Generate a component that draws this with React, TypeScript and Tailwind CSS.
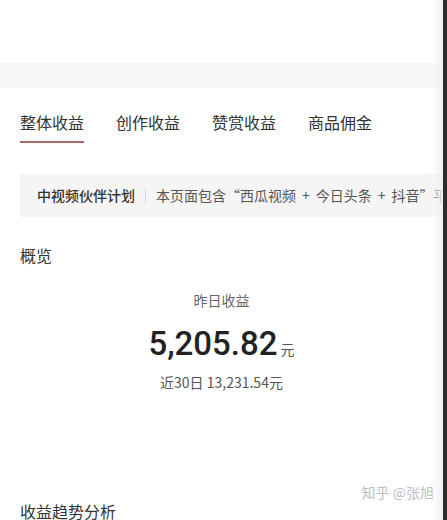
const tabs = ["整体收益", "创作收益", "赞赏收益", "商品佣金"];

export default function App() {
  return (
    <div
      className="flex h-[520px] w-[447px] overflow-hidden bg-white text-[#333]"
      style={{ fontFamily: '"Noto Sans CJK SC", "Noto Sans", sans-serif' }}
    >
      <div className="relative flex min-w-0 flex-1 flex-col">
        {/* top area */}
        <div className="h-[63px] shrink-0" />
        <div className="h-[25px] shrink-0 bg-[#f7f7f7]" />

        {/* tabs */}
        <div className="mt-[22px] flex gap-[32px] pl-5">
          {tabs.map((t, i) => (
            <div key={t} className="flex flex-col">
              <span className="text-[16px] leading-[24px] text-[#333]">{t}</span>
              <div className={`mt-[7px] h-[2px] ${i === 0 ? "bg-[#a86a6a]" : "bg-transparent"}`} />
            </div>
          ))}
        </div>

        {/* notice */}
        <div className="ml-5 mt-[31px] flex h-[43px] shrink-0 items-center overflow-hidden whitespace-nowrap bg-[#f5f5f5] pl-[17px] text-[14px]">
          <span className="shrink-0 font-medium text-[#333]">中视频伙伴计划</span>
          <span className="mx-[10px] h-[16px] w-px shrink-0 bg-[#d9d9d9]" />
          <span className="shrink-0 text-[#555]">
            本页面包含“西瓜视频<span className="mx-[6px]">+</span>今日头条<span className="mx-[6px]">+</span>抖音”平台的收益数据
          </span>
        </div>

        {/* overview */}
        <div className="mt-[26px] pl-5 text-[16px] leading-[24px]">概览</div>

        <div className="mt-[23px] flex flex-col items-center">
          <span className="text-[14px] leading-[20px] text-[#666]">昨日收益</span>
          <div className="mt-[14px] flex items-baseline">
            <span
              className="text-[33px] font-medium leading-[40px] text-[#222]"
              style={{ fontFamily: "Roboto, sans-serif" }}
            >
              5,205.82
            </span>
            <span className="ml-[3px] text-[14px] text-[#555]">元</span>
          </div>
          <span className="mt-[8px] text-[14px] leading-[20px] text-[#555]">近30日 13,231.54元</span>
        </div>

        <div className="mt-auto pl-5">
          <div className="translate-y-[3px] text-[16px] leading-[24px]">收益趋势分析</div>
        </div>

        {/* watermark */}
        <span className="absolute right-[9px] top-[482px] text-[14px] text-[#bdbdbd]">知乎 @张旭</span>

        {/* right edge shadow */}
        <div className="absolute right-0 top-0 h-full w-[12px] bg-gradient-to-r from-transparent to-[#f0f0f0]" />
      </div>
      <div className="w-[4px] shrink-0 bg-[#2b2b2b]" />
    </div>
  );
}
